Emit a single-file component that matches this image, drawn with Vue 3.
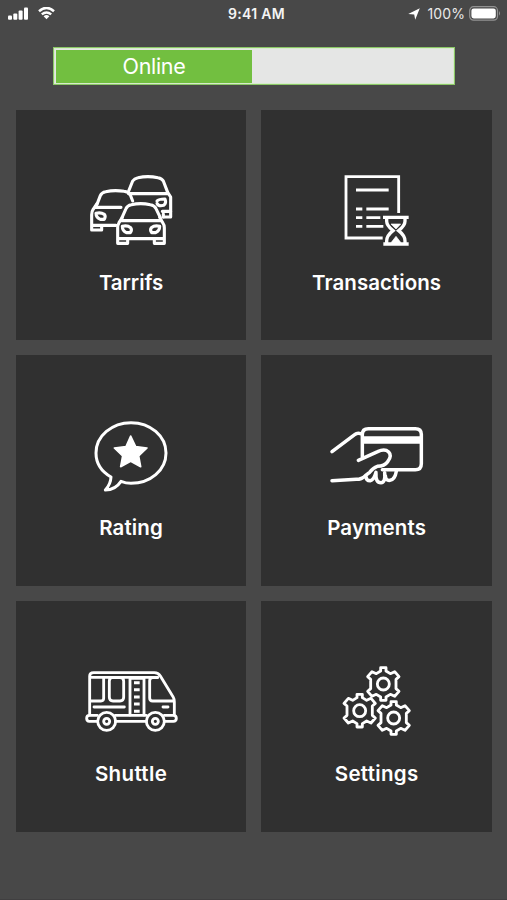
<script setup>
const tiles = [
  { id: 'tariffs', label: 'Tarrifs', box: '-12 0 330 270', spacing: '-0.05px' },
  { id: 'transactions', label: 'Transactions', box: '-24 0 330 270', spacing: '0.05px' },
  { id: 'rating', label: 'Rating', box: '-12 2 330 270', spacing: '0.1px' },
  { id: 'payments', label: 'Payments', box: '0 -13 330 270', spacing: '0.1px' },
  { id: 'shuttle', label: 'Shuttle', box: '-6 -11 330 270', spacing: '0.35px' },
  { id: 'settings', label: 'Settings', box: '-30 -5 330 270', spacing: '0.3px' },
]
const gears = [[154, 79], [83, 159], [185, 181]]
// Six-toothed outline, centred on the origin
const gear = 'M-8 -49H8V-39L21 -31L34 -37L47 -22L38 -14V14L47 22L34 37L21 31L8 39V49H-8V39L-21 31L-34 37L-47 22L-38 14V-14L-47 -22L-34 -37L-21 -31L-8 -39Z'
</script>

<template>
  <main class="screen">
    <header class="status">
      <div class="left">
        <svg class="signal" viewBox="0 0 20 13"><rect x="0" y="8.5" width="4" height="4.3" rx="1"/><rect x="5.3" y="6.5" width="4" height="6.3" rx="1"/><rect x="10.6" y="3.5" width="4" height="9.3" rx="1"/><rect x="16" y="0.5" width="4" height="12.3" rx="1"/></svg>
        <svg class="wifi" viewBox="0 0 17 13"><path d="M1 4.7Q8.5 -1.9 16 4.7M3.8 7.9Q8.5 4 13.2 7.9" fill="none" stroke="#fff" stroke-width="2.5"/><path d="M5.6 9.8Q8.5 7.4 11.4 9.8L8.5 12.8Z"/></svg>
      </div>
      <span class="time">9:41 AM</span>
      <div class="right">
        <svg class="location" viewBox="0 0 12 12"><path d="M11.8 .2L7.2 11.8L6.2 6.4L.2 6Z"/></svg>
        <span class="percent">100%</span>
        <svg class="battery" viewBox="0 0 32 15"><rect x=".7" y=".7" width="27.8" height="13.4" rx="3.8" fill="none" stroke="#929292" stroke-width="1.2"/><rect x="2.4" y="2.4" width="24.4" height="10" rx="2.3"/><path d="M30 5Q32 7.3 30 9.7Z" fill="#929292"/></svg>
      </div>
    </header>

    <div class="toggle"><div class="online">Online</div></div>

    <section class="grid">
      <article v-for="t in tiles" :key="t.id" class="tile">
        <svg class="icon" :viewBox="t.box">
          <template v-if="t.id === 'tariffs'">
            <path d="M146 78L158 48Q163 40 174 38Q203 32 234 38Q246 40 250 48L263 82L272 96V156H250"/>
            <path d="M146 86H262M247 139H272M250 147V156"/>
            <path d="M231 108Q236 102 255 102Q260 114 251 121Q235 125 231 115"/>
            <path d="M51 118L61 92Q65 82 77 80Q104 74 132 79Q146 81 151 90L158 108"/>
            <path d="M51 116L39 134Q35 140 35 149V195H65V182M46 127H123M35 181H108"/>
            <path d="M48 145Q62 141 73 148Q78 154 73 163H61Q48 158 48 145Z"/>
            <path d="M126 158L138 131Q142 121 154 119Q182 113 211 119Q224 121 228 131L241 158"/>
            <path d="M127 157L117 173Q113 180 113 188V235H143V221H223V235H253V188Q253 180 248 173L239 157M121 167H245M113 221H253"/>
            <path d="M127 184Q142 180 152 188Q157 194 151 203H139Q127 198 127 184ZM239 184Q224 180 214 188Q209 194 215 203H227Q239 198 239 184Z"/>
          </template>
          <g v-else-if="t.id === 'transactions'" class="sharp">
            <path d="M206 144V35H48V219H158M78 75H176M78 132H97M109 132H176M78 158H97M109 158H151M78 184H97M109 184H160"/>
            <path d="M159 157H236M160 237H236M170 158V169Q170 182 189 197Q170 212 170 228V237M225 158V169Q225 182 206 197Q225 212 225 228V237" class="medium"/>
            <path d="M183 177H212L198 192ZM198 214L212 232V237H184V232Z" class="solid"/>
          </g>
          <template v-else-if="t.id === 'rating'">
            <path d="M93 200C65 184 48 160 48 128C48 77 96 37 153 37C211 37 258 77 258 128C258 180 211 219 153 219Q138 219 123 213Q106 239 76 239Q92 222 93 200Z" class="bubble"/>
            <path d="M152 77L167 109L201 113L176 137L182 169L152 153L122 169L128 137L103 113L138 109Z" class="star"/>
          </template>
          <g v-else-if="t.id === 'payments'" class="heavy">
            <path d="M30 109L98 58Q106 51 116 55M121 124V57Q121 40 139 40H280Q298 40 298 57V145Q298 163 280 163H181"/>
            <path d="M121 74H298" class="stripe"/>
            <path d="M109 135L167 109Q188 99 200 110Q211 121 197 139Q188 152 166 153Q153 157 143 171L130 181Q119 192 103 192L30 196"/>
            <path d="M132 184Q132 196 145 196Q155 195 162 171M162 174Q160 202 177 202Q191 202 188 172M190 181Q191 197 204 195Q219 193 223 168"/>
          </g>
          <g v-else-if="t.id === 'shuttle'" class="bus">
            <path d="M35 166V49Q35 39 47 39H229Q241 39 247 49L285 111Q289 118 289 126V166M40 53H239M77 54V116Q77 124 69 124H40M103 54H126Q137 54 137 65V113Q137 124 126 124H105Q94 124 94 113V65Q94 54 103 54ZM156 166V56H198V166M239 54H224Q215 54 215 63V115Q215 124 224 124H286M48 142H139M255 142H270"/>
            <path d="M58 167H34Q26 167 26 176T34 185H59M112 167H205M112 185H205M259 167H286Q295 167 295 176T286 185H260"/>
            <circle cx="86" cy="185" r="27"/><circle cx="86" cy="185" r="9"/><circle cx="232" cy="185" r="27"/><circle cx="232" cy="185" r="9"/>
            <path d="M168 69H185M168 90H185M168 112H185M168 133H185M168 155H185" class="step"/>
          </g>
          <template v-else>
            <g v-for="([x, y], i) in gears" :key="i" :transform="`translate(${x} ${y})`" class="gear"><path :d="gear"/><circle r="18"/></g>
          </template>
        </svg>
        <h2 class="label" :style="{ letterSpacing: t.spacing }">{{ t.label }}</h2>
      </article>
    </section>
  </main>
</template>

<style>
body { margin: 0; background: #484848; }
</style>
<style scoped>
.screen { box-sizing: border-box; width: 507px; height: 900px; background: #484848; color: #fff; font-family: Inter, "Liberation Sans", sans-serif; overflow: hidden; border-bottom: 1px solid #403f40; }
.status { box-sizing: border-box; height: 47px; padding: 6px 6px 0 8px; display: grid; grid-template-columns: 1fr auto 1fr; align-items: start; }
.status svg { display: block; fill: #fff; }
.left { display: flex; gap: 10px; }
.signal { width: 20px; height: 13px; padding-top: 1px; }
.wifi { width: 17px; height: 13px; padding-top: .5px; }
.time { font-size: 14px; line-height: 16px; font-weight: 600; letter-spacing: .3px; padding-left: 4px; color: #f4f4f4; }
.right { display: flex; justify-content: flex-end; align-items: flex-start; }
.location { width: 12px; height: 12px; margin: 1.5px 7px 0 0; }
.percent { font-size: 14px; line-height: 16px; letter-spacing: .1px; margin-right: 4px; color: #e8e8e8; }
.battery { width: 32px; height: 15px; }
.toggle { box-sizing: border-box; width: 402px; height: 38px; margin: 0 0 0 53px; padding: 1px; border: 1px solid #8bc866; background: #e5e6e5; box-shadow: inset 0 0 0 1px #d7ebcc; }
.online { box-sizing: border-box; width: 196px; height: 33px; margin: 1px 0 0 1px; background: #72bf40; text-align: center; font: 400 21.5px/33px Inter, "Liberation Sans", sans-serif; letter-spacing: -.3px; }
.grid { display: grid; grid-template-columns: 230.9px 230.9px; grid-auto-rows: 230.8px; gap: 14.8px 14.7px; padding: 24.6px 0 0 15.6px; }
.tile { box-sizing: border-box; padding-top: 55.4px; background: #303030; display: flex; flex-direction: column; align-items: center; }
.icon { width: 110px; height: 90px; flex: none; fill: none; stroke: #fff; stroke-width: 9.3; stroke-linecap: round; stroke-linejoin: round; }
.sharp { stroke-width: 8.5; stroke-linecap: butt; stroke-linejoin: miter; }
.medium { stroke-width: 10; }
.solid, .star { fill: #fff; stroke-width: 2; }
.star { stroke-width: 5; }
.bubble { stroke-width: 9; }
.heavy { stroke-width: 10.5; }
.stripe { stroke-width: 22; stroke-linecap: butt; }
.bus { stroke-width: 8.5; }
.step { stroke-width: 9; stroke-linecap: butt; }
.gear { stroke-width: 8.5; stroke-linejoin: round; }
.label { margin: 14.7px 0 0; font-size: 20.5px; line-height: 25px; font-weight: 600; white-space: nowrap; }
</style>
